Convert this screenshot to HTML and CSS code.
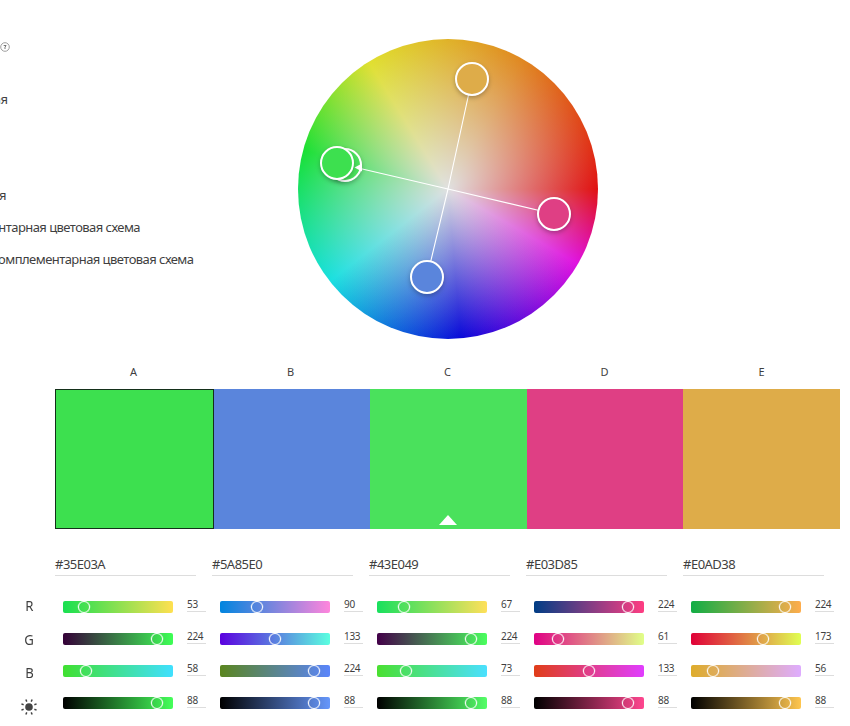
FILE: index.html
```html
<!DOCTYPE html>
<html lang="ru">
<head>
<meta charset="utf-8">
<title>Цветовой круг</title>
<link rel="stylesheet" href="styles.css">
</head>
<body>
<main class="page">
  <section class="top">
    <div class="rules">
      <svg class="help" viewBox="0 0 10 10"><circle cx="5" cy="5" r="4.3" fill="none" stroke="#888" stroke-width=".8"/><path d="M3.700 3.500H6.100L5 5.200V7" fill="none" stroke="#666" stroke-width=".9"/></svg>
      <p class="rule rule-a"><span>ая</span></p>
      <p class="rule rule-b"><span>я</span></p>
      <p class="rule rule-c"><span>нтарная цветовая схема</span></p>
      <p class="rule rule-d"><span>омплементарная цветовая схема</span></p>
    </div>
    <div class="wheel">
      <svg class="markers" viewBox="298 39 300 300">
        <g stroke="#fff" stroke-width="1.1"><path d="M448 189L472 79M448 189L427 277M448 189L554 214M448 189L358 168"/></g>
        <g class="marker" stroke="#fff" stroke-width="2">
          <circle cx="472" cy="79" r="16" fill="#deac49"/>
          <circle cx="427" cy="277" r="16" fill="#5a85dc"/>
          <circle cx="554" cy="214" r="16" fill="#df3f84"/>
          <circle cx="345" cy="165" r="16" fill="#4ae15c"/>
        </g>
        <path d="M354.500 167.500L362 163.500V171.500Z" fill="#fff"/>
        <circle class="marker" cx="337" cy="163" r="16" fill="#3de04f" stroke="#fff" stroke-width="2"/>
      </svg>
    </div>
  </section>
  <section class="labels"><span>A</span><span>B</span><span>C</span><span>D</span><span>E</span></section>
  <section class="swatches">
    <div class="swatch sw-a"></div><div class="swatch sw-b"></div><div class="swatch sw-c"><i class="base"></i></div><div class="swatch sw-d"></div><div class="swatch sw-e"></div>
  </section>
  <section class="controls">
    <div class="channels">
      <span>R</span><span>G</span><span>B</span>
      <svg class="sun" viewBox="0 0 18 18"><circle cx="9" cy="9" r="3.800" fill="#444"/><g stroke="#444" stroke-width="1.500"><path d="M9 3.200V.800M9 14.800V17.200M3.200 9H.800M14.800 9H17.200M4.900 4.900L3.200 3.200M13.100 13.100L14.800 14.800M4.900 13.100L3.200 14.800M13.100 4.900L14.800 3.200" transform="rotate(22.5 9 9)"/></g></svg>
    </div>
    <div class="colors" id="colors"></div>
  </section>
</main>
<script src="app.js"></script>
</body>
</html>
```
FILE: styles.css
```css
* { box-sizing: border-box; }
body { margin: 0; background: #fff; color: #3f3f3f; font-family: "Noto Sans", "Open Sans", sans-serif; }
.page { width: 850px; height: 726px; overflow: hidden; }
.top { display: flex; height: 361px; padding-top: 39px; }
.rules { width: 298px; display: flex; flex-direction: column; }
.help { display: block; width: 10px; height: 10px; margin: 3px 0 0; }
.rule { display: flex; justify-content: flex-end; margin: 0; height: 32px; line-height: 32px; font-size: 13px; white-space: nowrap; letter-spacing: -.55px; }
.rule-a { width: 7.500px; margin-top: 31px; }
.rule-b { width: 6px; margin-top: 64px; }
.rule-c { width: 140px; }
.rule-d { width: 193.500px; }
.wheel {
  width: 300px; height: 300px; border-radius: 50%;
  background:
    radial-gradient(circle closest-side, #e0e0e0, rgba(224,224,224,.04)),
    conic-gradient(from 0deg, #e0b020 0deg, #e08318 30deg, #e00808 90deg, #e008e0 120deg, #0000d8 175deg, #10e0e0 232deg, #10e02c 285deg, #e0e028 328deg, #e0b020 360deg);
}
.markers { display: block; width: 300px; height: 300px; overflow: visible; }
.marker { filter: drop-shadow(0 2px 2px rgba(0,0,0,.25)); }
.labels { display: grid; grid-template-columns: repeat(5, 157px); margin-left: 55px; height: 28px; line-height: 21px; font-size: 11px; text-align: center; }
.swatches { display: grid; grid-template-columns: 159px 156px 157px 156px 157px; width: 785px; margin-left: 55px; height: 140px; }
.swatch { display: flex; justify-content: center; align-items: flex-end; }
.sw-a { background: #3de04f; border: 1px solid #14301a; }
.sw-b { background: #5a85dc; }
.sw-c { background: #4ae15c; }
.sw-d { background: #df3f84; }
.sw-e { background: #deac49; }
.base { border: 9px solid transparent; border-top: 0; border-bottom: 10px solid #fff; margin: 0 1px 4px 0; }
.controls { display: flex; padding-top: 22px; }
.channels { width: 55px; padding-top: 38px; display: flex; flex-direction: column; align-items: center; }
.channels span { height: 33.500px; line-height: 33px; font-size: 14px; transform: scaleX(.94); margin-left: 4px; }
.sun { width: 18px; height: 18px; margin: 8px 0 0 3px; }
.colors { display: grid; grid-template-columns: repeat(5, 157px); }
.hex { width: 141px; height: 25px; line-height: 27px; font-size: 13px; border-bottom: 1px solid #ddd; letter-spacing: -.5px; margin-bottom: 15px; }
.row { display: flex; height: 32px; padding-left: 8px; align-items: center; }
.track { position: relative; width: 110px; height: 12px; border-radius: 2px; margin-right: 14px; }
.knob { position: absolute; top: 0; width: 12px; height: 12px; border: 1.2px solid #fff; border-radius: 50%; box-shadow: 0 0 0 .3px rgba(255,255,255,.6); }
.value { width: 19px; height: 14px; line-height: 12px; margin-top: -5px; font-size: 10px; border-bottom: 1px solid #ddd; letter-spacing: -.3px; }
```
FILE: app.js
```javascript
const palette = [
  { hex: '#35E03A', rgb: [53, 224, 58], bars: [['#18e051','#ffe050'],['#350038','#3dff55'],['#40e030','#40e0ff'],['#000','#45ff5a']] },
  { hex: '#5A85E0', rgb: [90, 133, 224], bars: [['#0085df','#ff85dc'],['#5a00df','#5affe0'],['#5a851e','#5a85fb'],['#000','#6697fb']] },
  { hex: '#43E049', rgb: [67, 224, 73], bars: [['#18e05e','#ffe05a'],['#430049','#4aff5e'],['#4ae030','#4ae0ff'],['#000','#54ff68']] },
  { hex: '#E03D85', rgb: [224, 61, 133], bars: [['#003d85','#ff3d82'],['#e00085','#e0ff88'],['#e03d18','#e03dff'],['#000','#ff468f']] },
  { hex: '#E0AD38', rgb: [224, 173, 56], bars: [['#10ad45','#ffad4c'],['#e00038','#e0ff52'],['#deac2a','#deacff'],['#000','#ffc64f']] }
];
document.getElementById('colors').innerHTML = palette.map(c => {
  const rows = c.bars.map(([from, to], i) => {
    const value = i < 3 ? c.rgb[i] : 88;
    const center = i < 3 ? Math.round(value * 0.427 - 1.8) : 94;
    return `<div class="row"><div class="track" style="background:linear-gradient(90deg,${from},${to})"><i class="knob" style="left:${center - 6}px"></i></div><div class="value">${value}</div></div>`;
  }).join('');
  return `<div><div class="hex">${c.hex}</div>${rows}</div>`;
}).join('');
```
